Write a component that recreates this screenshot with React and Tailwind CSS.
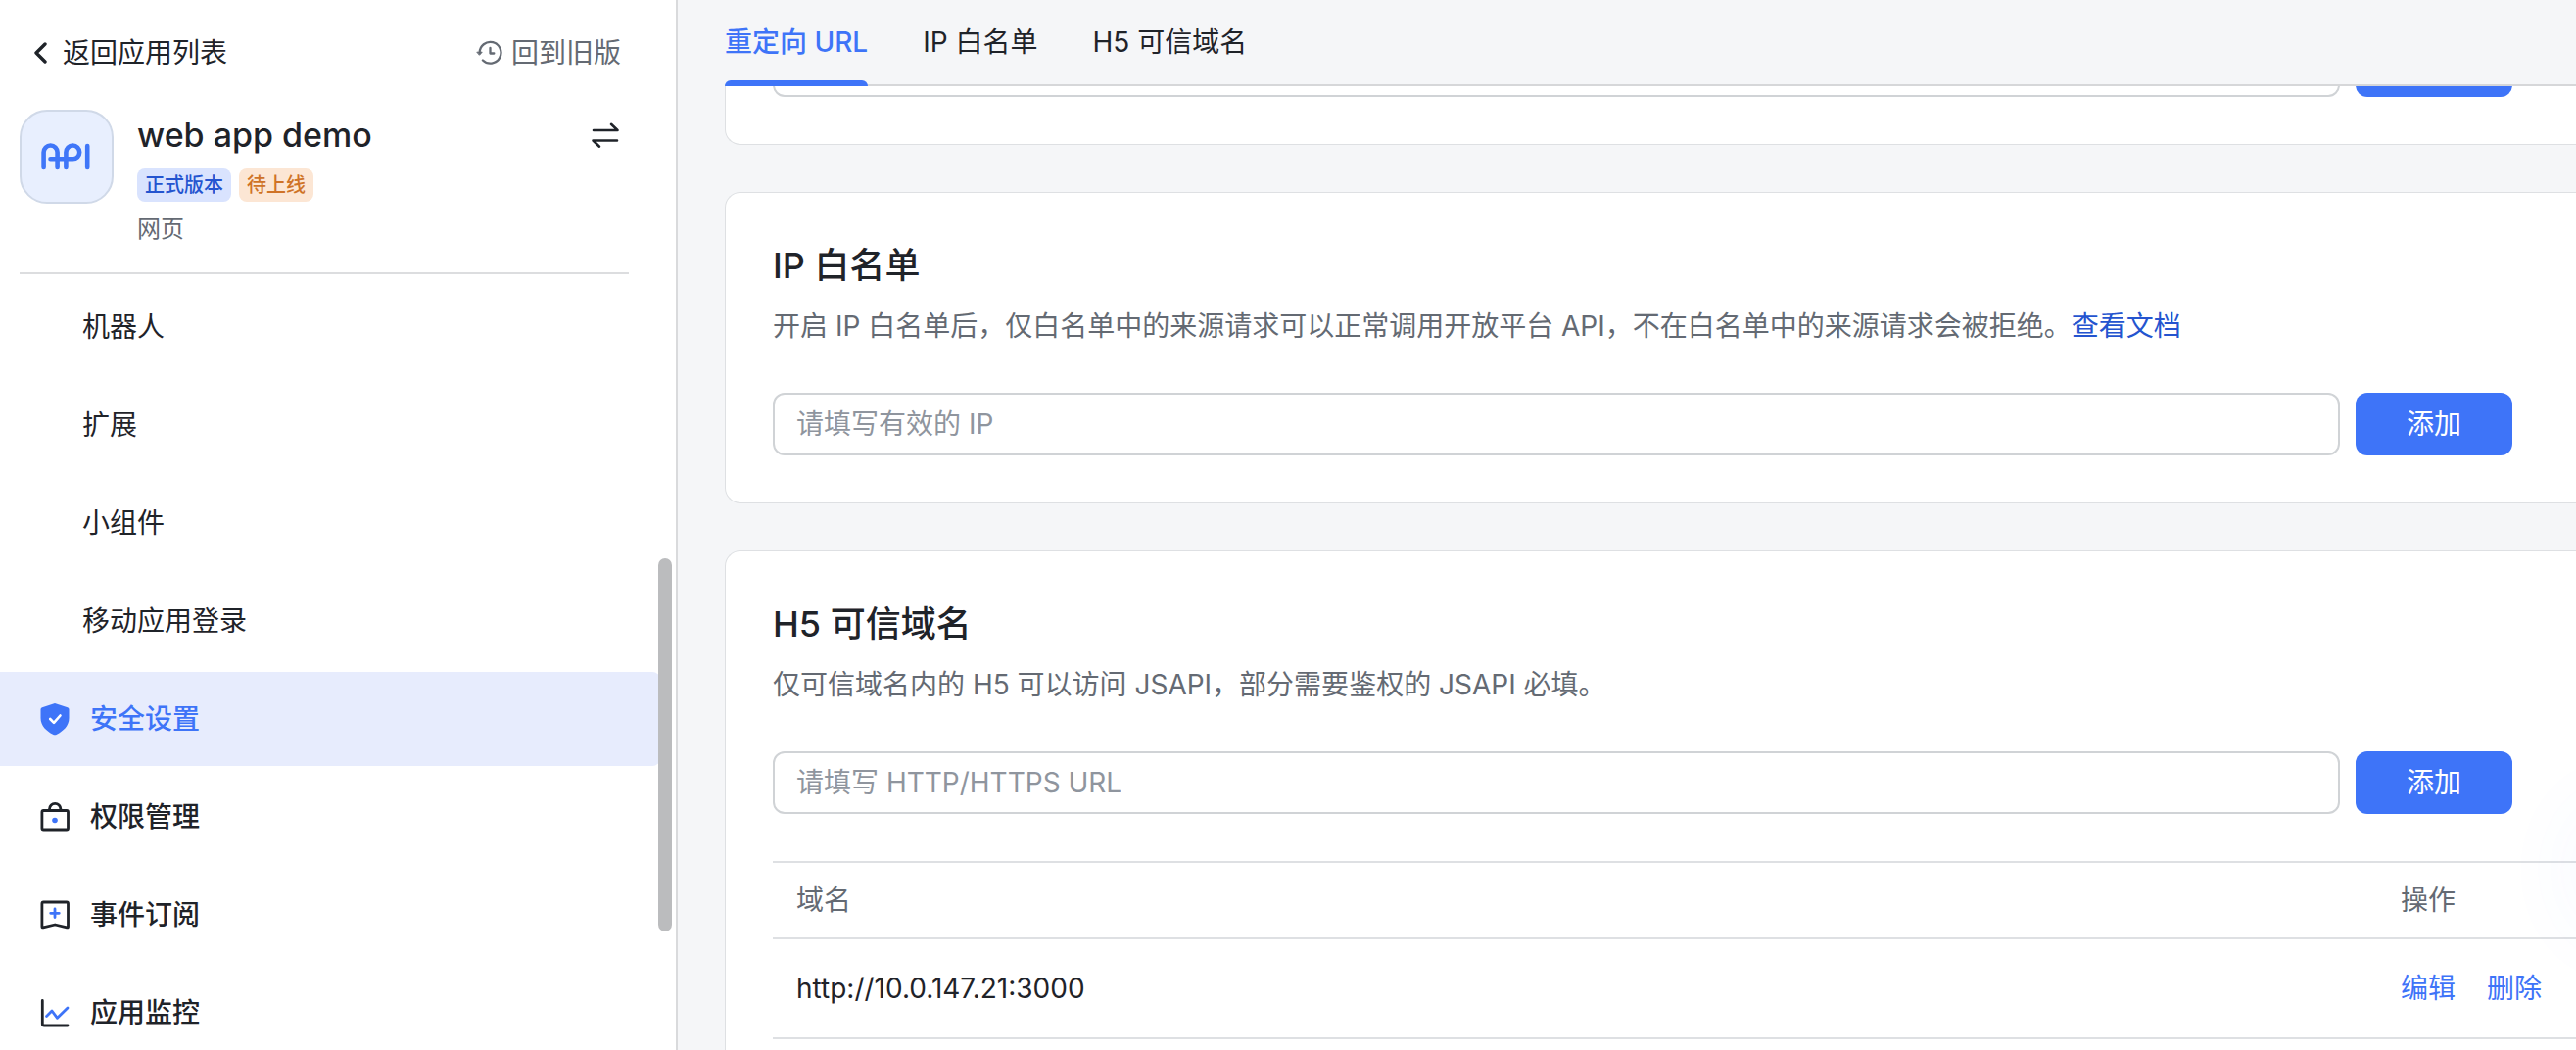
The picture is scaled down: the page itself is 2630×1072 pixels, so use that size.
const FONT = "font-['Inter','Noto_Sans_CJK_SC',sans-serif]";

function BackIcon() {
  return (
    <svg className="h-7 w-3.5" viewBox="0 0 14 28" fill="none" stroke="currentColor" strokeWidth="3.400" strokeLinecap="round" strokeLinejoin="round" aria-hidden="true">
      <path d="M12 5 3 14l9 9" />
    </svg>
  );
}

function HistoryIcon() {
  return (
    <svg className="size-7" viewBox="0 0 28 28" fill="none" stroke="currentColor" strokeWidth="2.300" strokeLinecap="round" strokeLinejoin="round" aria-hidden="true">
      <path d="M3.700 14A10.900 10.900 0 1 1 6.900 21.500" />
      <path d="M1.200 13.200h5L3.700 16z" fill="currentColor" strokeWidth="1" />
      <path d="M14.500 9v5.500h3.800" />
    </svg>
  );
}

function SwapIcon() {
  return (
    <svg className="size-7" viewBox="0 0 28 28" fill="none" stroke="currentColor" strokeWidth="2.600" strokeLinecap="round" strokeLinejoin="round" aria-hidden="true">
      <path d="M2 9h24.500L20 2.800" />
      <path d="M26 19.500H1.500L8 25.700" />
    </svg>
  );
}

function ApiLogo() {
  return (
    <svg className="h-10 w-[52px]" viewBox="0 0 52 40" fill="none" stroke="#3f76f8" strokeWidth="4.600" strokeLinecap="round" strokeLinejoin="round" aria-hidden="true">
      <path d="M2.600 31V15.500a7 7 0 0 1 14 0V31" />
      <path d="M9.500 22.300h22.800a6.900 6.900 0 1 0-6.900-6.900V31" />
      <path d="M47.200 9v22" />
    </svg>
  );
}

function ShieldIcon() {
  return (
    <svg className="size-9" viewBox="0 0 36 36" fill="none" aria-hidden="true">
      <path d="M18 2 31 6.200q1.500.6 1.500 2V17c0 8-6 13.500-12.500 16.700q-2 1-4 0C9.500 30.500 3.500 25 3.500 17V8.200q0-1.400 1.500-2z" fill="#3e74f8" />
      <path d="m13.200 18 3.800 3.800 6.500-7.300" stroke="#fff" strokeWidth="2.600" strokeLinecap="round" strokeLinejoin="round" />
    </svg>
  );
}

function LockIcon() {
  return (
    <svg className="size-9" viewBox="0 0 36 36" fill="none" stroke="#1f2329" strokeWidth="2.800" strokeLinejoin="round" aria-hidden="true">
      <rect x="4.900" y="11.500" width="26.600" height="19.500" rx="1.500" />
      <path d="M12.500 11V10a5.700 5.700 0 0 1 11.400 0v1" />
      <circle cx="18" cy="21.500" r="2.800" fill="#3e74f8" stroke="none" />
    </svg>
  );
}

function EventIcon() {
  return (
    <svg className="size-9" viewBox="0 0 36 36" fill="none" strokeWidth="2.800" strokeLinecap="round" strokeLinejoin="round" aria-hidden="true">
      <path d="M6.400 5h23.600q1.500 0 1.500 1.500V30q0 1.200-1.200.9L18.200 28 6.100 30.900q-1.200.3-1.200-.9V6.500Q4.900 5 6.400 5z" stroke="#1f2329" />
      <path d="M18 12v8.600M13.700 16.300h8.600" stroke="#3e74f8" />
    </svg>
  );
}

function MonitorIcon() {
  return (
    <svg className="size-9" viewBox="0 0 36 36" fill="none" strokeWidth="2.800" strokeLinecap="round" strokeLinejoin="round" aria-hidden="true">
      <path d="M5.300 5.500v23.700q0 1.800 1.800 1.800H31" stroke="#1f2329" />
      <path d="m9.500 21.500 5.500-5.500 5.500 7.300L31 13" stroke="#3e74f8" />
    </svg>
  );
}

const subItems = ["机器人", "扩展", "小组件", "移动应用登录"];
const mainItems = [
  { label: "安全设置", Icon: ShieldIcon, active: true },
  { label: "权限管理", Icon: LockIcon },
  { label: "事件订阅", Icon: EventIcon },
  { label: "应用监控", Icon: MonitorIcon },
];

function Sidebar() {
  return (
    <aside className="relative flex w-[692px] shrink-0 flex-col border-r-2 border-[#d9dadc] bg-white">
      <div className="flex items-center justify-between pt-8 pr-14 pl-[34px]">
        <a href="#apps" className="flex items-center gap-4 text-[28px] leading-11">
          <BackIcon />
          返回应用列表
        </a>
        <a href="#legacy" className="flex items-center gap-2 text-[28px] leading-11 text-[#646a73]">
          <HistoryIcon />
          回到旧版
        </a>
      </div>
      <div className="mr-12 ml-5 flex gap-6 border-b-2 border-[#dcdddf] pt-9 pb-[26px]">
        <div className="flex size-24 shrink-0 items-center justify-center rounded-[28px] border-2 border-[#d0d9e8] bg-[#e8effe]">
          <ApiLogo />
        </div>
        <div className="min-w-0 flex-1">
          <div className="flex items-center justify-between pr-2.5">
            <h1 className="text-[34px] leading-13 font-medium">web app demo</h1>
            <button type="button" aria-label="切换应用">
              <SwapIcon />
            </button>
          </div>
          <div className="mt-2 flex gap-2 text-xl leading-[34px] font-medium">
            <span className="rounded-lg bg-[#d9e3fe] px-2 text-[#2454cf]">正式版本</span>
            <span className="rounded-lg bg-[#fce6d4] px-2 text-[#cf7327]">待上线</span>
          </div>
          <p className="mt-2.5 text-2xl leading-9 text-[#646a73]">网页</p>
        </div>
      </div>
      <nav className="flex min-h-0 flex-1 flex-col gap-1 overflow-hidden pt-1.5 pr-4">
        {subItems.map((label) => (
          <a key={label} href="#feature" className="flex h-24 shrink-0 items-center pl-21 text-[28px]">
            {label}
          </a>
        ))}
        {mainItems.map(({ label, Icon, active }) => (
          <a
            key={label}
            href="#section"
            className={
              active
                ? "flex h-24 shrink-0 items-center gap-[18px] rounded-r-lg bg-[#e7ecfd] pl-[38px] text-[28px] font-medium text-[#3e74f8]"
                : "flex h-24 shrink-0 items-center gap-[18px] pl-[38px] text-[28px] font-medium"
            }
          >
            <Icon />
            {label}
          </a>
        ))}
      </nav>
      <div className="absolute top-[570px] right-1 h-[381px] w-3.5 rounded-full bg-[#bbbcbe]" />
    </aside>
  );
}

function AddForm({ label, placeholder, action }) {
  return (
    <form className="flex gap-4 pr-[65px]">
      <input
        type="text"
        aria-label={label}
        placeholder={placeholder}
        className="h-16 min-w-0 flex-1 rounded-xl border-2 border-[#d0d3d6] bg-white px-[22px] text-[28px] placeholder:text-[#8f959e]"
      />
      <button type="button" aria-label={`添加${label}`} className="h-16 w-40 rounded-xl bg-[#3e74f8] text-[28px] text-white">
        {action}
      </button>
    </form>
  );
}

function Card({ children }) {
  return <section className="rounded-l-2xl border border-r-0 border-[#dee0e3] bg-white py-12 pl-12">{children}</section>;
}

function CardTitle({ title, children }) {
  return (
    <div className="mb-[46px]">
      <h2 className="text-4xl leading-13 font-medium">{title}</h2>
      <p className="mt-3.5 text-[28px] leading-11 text-[#646a73]">{children}</p>
    </div>
  );
}

const tabs = ["重定向 URL", "IP 白名单", "H5 可信域名"];

export default function App() {
  return (
    <div className={`relative flex h-screen overflow-hidden bg-[#f5f6f8] text-[#1f2329] ${FONT}`}>
      <Sidebar />
      <main className="flex min-w-0 flex-1 flex-col pl-12">
        <div role="tablist" className="flex h-22 shrink-0 gap-14 border-b-2 border-[#d6d7d9]">
          {tabs.map((tab, i) => (
            <button
              key={tab}
              type="button"
              role="tab"
              aria-selected={i === 0}
              className={
                i === 0
                  ? "relative text-[28px] font-medium text-[#3e74f8] after:absolute after:inset-x-0 after:-bottom-0.5 after:h-1.5 after:rounded-t-md after:bg-[#3e74f8]"
                  : "text-[28px]"
              }
            >
              {tab}
            </button>
          ))}
        </div>
        <div className="min-h-0 flex-1 overflow-hidden">
          <div className="-mt-[102px] flex flex-col gap-12">
            <Card>
              <AddForm label="重定向 URL" />
            </Card>
            <Card>
              <CardTitle title="IP 白名单">
                开启 IP 白名单后，仅白名单中的来源请求可以正常调用开放平台 API，不在白名单中的来源请求会被拒绝。
                <a href="#docs" className="text-[#2454cf]">查看文档</a>
              </CardTitle>
              <AddForm label="IP 白名单" placeholder="请填写有效的 IP" action="添加" />
            </Card>
            <Card>
              <CardTitle title="H5 可信域名">仅可信域名内的 H5 可以访问 JSAPI，部分需要鉴权的 JSAPI 必填。</CardTitle>
              <AddForm label="H5 可信域名" placeholder="请填写 HTTP/HTTPS URL" action="添加" />
              <table className="mt-12 w-full border-y-2 border-[#dee0e3] text-left text-[28px]">
                <thead className="text-[#646a73]">
                  <tr className="h-[78px] border-b-2 border-[#dee0e3]">
                    <th scope="col" className="pl-6 font-normal">域名</th>
                    <th scope="col" className="w-[179px] font-normal">操作</th>
                  </tr>
                </thead>
                <tbody>
                  <tr className="h-[102px]">
                    <td className="pl-6">http://10.0.147.21:3000</td>
                    <td>
                      <div className="flex gap-8 text-[#3e74f8]">
                        <button type="button">编辑</button>
                        <button type="button">删除</button>
                      </div>
                    </td>
                  </tr>
                </tbody>
              </table>
            </Card>
          </div>
        </div>
      </main>
      <div className="pointer-events-none absolute top-[840px] -right-24 h-24 w-20 rounded-full shadow-[0_0_90px_16px_rgba(62,116,248,0.06)]" />
    </div>
  );
}
